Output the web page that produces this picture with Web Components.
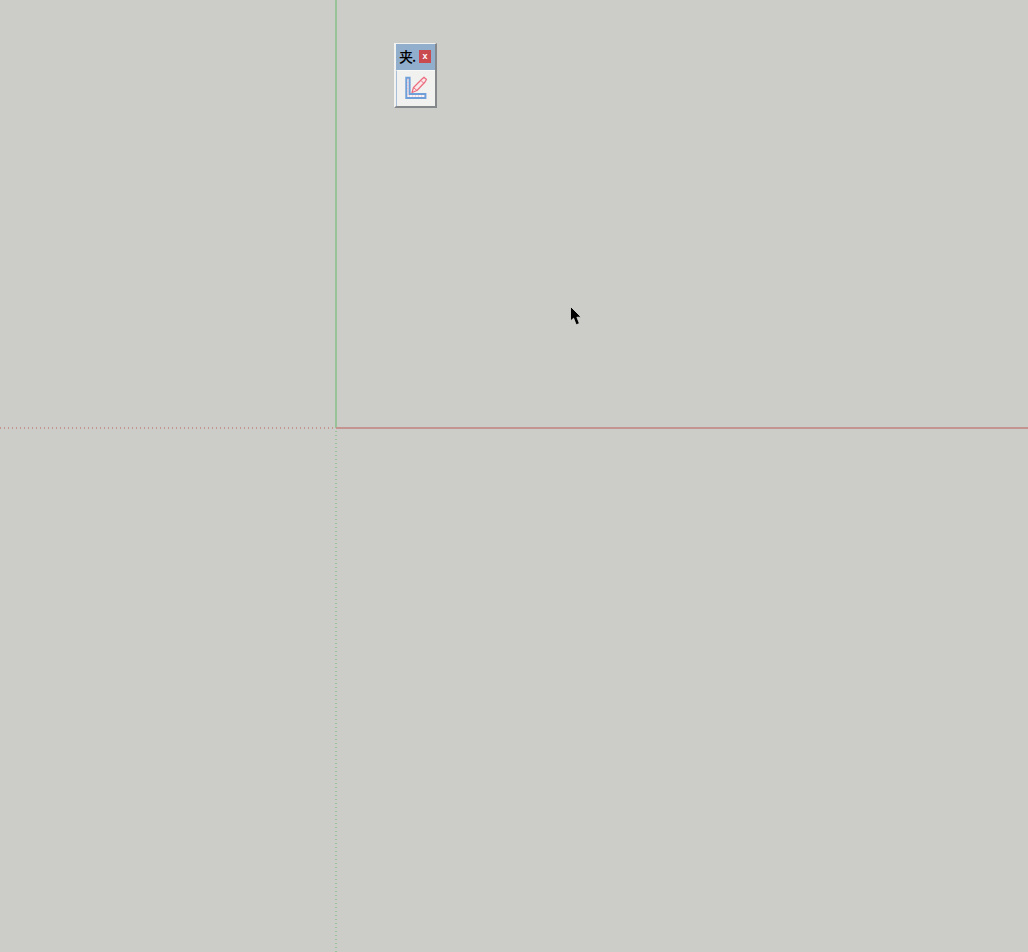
<!DOCTYPE html>
<html>
<head>
<meta charset="utf-8">
<title>Sketch viewport</title>
<style>
  html, body { margin: 0; height: 100%; background: #cccdc8; overflow: hidden; }
</style>
</head>
<body>
<model-viewport>
  <model-axes></model-axes>
  <tool-window title-text="夹." style="left:394px;top:43px">
    <section-icon></section-icon>
  </tool-window>
  <mouse-cursor style="left:570px;top:306px"></mouse-cursor>
</model-viewport>

<script>
class ModelViewport extends HTMLElement {
  constructor() {
    super()
    this.attachShadow({mode: 'open'})
    this.shadowRoot.innerHTML = `<style>
      :host {
        display: block;
        position: relative;
        width: 1028px;
        height: 952px;
        background: #cccdc8;
        overflow: hidden;
      }
    </style>
    <slot></slot>`
  }
}

// the drawing axes: solid from the origin, dotted behind it
class ModelAxes extends HTMLElement {
  constructor() {
    super()
    this.attachShadow({mode: 'open'})
    this.shadowRoot.innerHTML = `<style>
      :host { display: block; position: absolute; inset: 0; --red: #c49490; --green: #98c298; }
      div { position: absolute; }
      .green { left: 335px; top: 0; width: 2px; height: 428px; background: var(--green); }
      .red { left: 336px; top: 427px; width: 692px; height: 2px; background: var(--red); }
      .red-dots {
        left: 0; top: 427px; width: 335px; height: 2px;
        background: repeating-linear-gradient(90deg, var(--red) 0 1px, transparent 1px 4px);
      }
      .green-dots {
        left: 335px; top: 431px; width: 2px; height: 521px;
        background: repeating-linear-gradient(180deg, var(--green) 0 1px, transparent 1px 4px);
      }
    </style>
    <div class="green"></div>
    <div class="red"></div>
    <div class="red-dots"></div>
    <div class="green-dots"></div>`
  }
}

class ToolWindow extends HTMLElement {
  constructor() {
    super()
    this.attachShadow({mode: 'open'})
    this.shadowRoot.innerHTML = `<style>
      :host {
        display: block;
        position: absolute;
        width: 43px;
        height: 65px;
        box-sizing: border-box;
        border-style: solid;
        border-width: 1px 2px 2px 2px;
        border-color: #f2f2f0 #85888a #85888a #f2f2f0;
      }
      .frame {
        display: flex;
        flex-direction: column;
        height: 100%;
        background: #e6e7e6;
      }
      .title {
        display: flex;
        align-items: center;
        justify-content: space-between;
        height: 26px;
        padding: 0 4px 1px 3px;
        box-sizing: border-box;
        background: #91aecd;
        font: 500 14px/25px "Noto Sans CJK SC", "Liberation Sans", sans-serif;
        color: #000;
      }
      .name { margin-top: -1px; letter-spacing: -1px; }
      .close {
        display: flex;
        align-items: center;
        justify-content: center;
        width: 12px;
        height: 13px;
        background: #c94b50;
        color: #fff;
        font: bold 9px/13px "Liberation Sans", sans-serif;
      }
      .body {
        flex: 1;
        display: flex;
        align-items: flex-start;
        justify-content: center;
        box-sizing: border-box;
        padding-top: 5px;
        background: #f1f1f0;
        border-top: 1px solid #f9f9f8;
        border-left: 1px solid #a9bfd8;
      }
    </style>
    <div class="frame">
      <div class="title"><span class="name"></span><span class="close">x</span></div>
      <div class="body"><slot></slot></div>
    </div>`
  }

  connectedCallback() {
    this.shadowRoot.querySelector('.name').textContent = this.getAttribute('title-text')
  }
}

class SectionIcon extends HTMLElement {
  constructor() {
    super()
    this.attachShadow({mode: 'open'})
    this.shadowRoot.innerHTML = `<style>
      :host { display: block; width: 24px; height: 24px; }
      svg { display: block; overflow: visible; }
    </style>
    <svg width="24" height="24" viewBox="0 0 24 24">
      <path d="M2.3 1.7H5.6V18H21.4V22H2.3Z" fill="#f8f4f6" stroke="#6f9fd8" stroke-width="2"/>
      <path d="M4 3V20H20.5" fill="none" stroke="#ecb4c6" stroke-width="1.2" stroke-dasharray="1 2"/>
      <path d="M8 16.5L9.5 11.5L18 3L20 1.2L22.5 3.5L21 6L13 14.5Z" fill="#f8e8ea" stroke="#ec6b7d" stroke-width="1.2" stroke-linejoin="round"/>
      <path d="M9.5 11.5L13 14.5M17 4.5L20 7.5" fill="none" stroke="#ec6b7d" stroke-width="1"/>
    </svg>`
  }
}

class MouseCursor extends HTMLElement {
  constructor() {
    super()
    this.attachShadow({mode: 'open'})
    this.shadowRoot.innerHTML = `<style>
      :host { display: block; position: absolute; width: 14px; height: 22px; }
      svg { display: block; }
    </style>
    <svg width="14" height="22" viewBox="0 0 14 22">
      <path d="M0.5 0.5V15L3.6 12.2L6.2 18.8L9.4 17.5L6.9 11.2H11.2Z" fill="#000" stroke="#dededb" stroke-width="0.8"/>
    </svg>`
  }
}

customElements.define('model-viewport', ModelViewport)
customElements.define('model-axes', ModelAxes)
customElements.define('tool-window', ToolWindow)
customElements.define('section-icon', SectionIcon)
customElements.define('mouse-cursor', MouseCursor)
</script>
</body>
</html>
